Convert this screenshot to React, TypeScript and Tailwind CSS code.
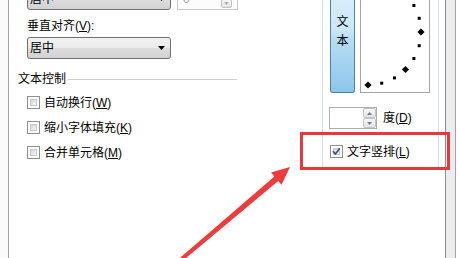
import React from "react";

function CheckBox({ checked }: { checked?: boolean }) {
  return (
    <div className="relative w-[13px] h-[13px] shrink-0 border border-[#8e8f8f] bg-white p-[2px]">
      <div className="w-full h-full border border-[#c4c7cb] bg-[linear-gradient(135deg,#d3d6da,#f7f8f9)]" />
      {checked && (
        <svg className="absolute left-[-1px] top-[-1px]" width="13" height="13" viewBox="0 0 13 13">
          <path d="M3 6.2 L5.4 9 L9.8 3.2" fill="none" stroke="#3e5088" strokeWidth="1.7" strokeLinejoin="round" />
        </svg>
      )}
    </div>
  );
}

function Combo() {
  return (
    <div className="w-[144px] h-[22px] shrink-0 rounded-[3px] border border-[#707070] bg-[linear-gradient(to_bottom,#f2f2f2_0%,#ebebeb_50%,#dddddd_51%,#d2d2d2_100%)] flex items-center pl-[2px] pr-[5px]">
      <span className="flex-1">居中</span>
      <svg width="7" height="4" viewBox="0 0 7 4">
        <path d="M0 0 H7 L3.5 4 Z" fill="#000" />
      </svg>
    </div>
  );
}

function SpinButtons({ light }: { light?: boolean }) {
  const arrow = light ? "#b0b0b0" : "#6a7a8c";
  return (
    <div className="flex flex-col w-[13px] h-full">
      <div className="flex-1 rounded-[2px] border border-[#c3c3c3] bg-[linear-gradient(to_bottom,#f7f7f7,#e4e4e4)] flex items-center justify-center">
        <svg width="5" height="3" viewBox="0 0 5 3"><path d="M0 3 H5 L2.5 0 Z" fill={arrow} /></svg>
      </div>
      <div className="flex-1 rounded-[2px] border border-[#c3c3c3] bg-[linear-gradient(to_bottom,#f7f7f7,#e4e4e4)] flex items-center justify-center">
        <svg width="5" height="3" viewBox="0 0 5 3"><path d="M0 0 H5 L2.5 3 Z" fill={arrow} /></svg>
      </div>
    </div>
  );
}

function Dots() {
  const cx = 7;
  const cy = 32;
  const r = 53;
  const items: { a: number; big: boolean }[] = [
    { a: -45, big: true },
    { a: -30, big: false },
    { a: -15, big: false },
    { a: 0, big: true },
    { a: 15, big: false },
    { a: 30, big: false },
    { a: 45, big: true },
    { a: 60, big: false },
    { a: 75, big: false },
    { a: 90, big: true },
  ];
  return (
    <svg width="68" height="92" viewBox="0 0 68 92" className="block">
      {items.map((it, i) => {
        const rad = (it.a * Math.PI) / 180;
        const x = cx + r * Math.cos(rad);
        const y = cy + r * Math.sin(rad);
        if (it.big) {
          const s = 3.6;
          return (
            <polygon
              key={i}
              points={`${x},${y - s} ${x + s},${y} ${x},${y + s} ${x - s},${y}`}
              fill="#000"
            />
          );
        }
        return <rect key={i} x={x - 1.5} y={y - 1.5} width="3" height="3" fill="#000" />;
      })}
    </svg>
  );
}

export default function App() {
  return (
    <div className="relative w-[458px] h-[258px] overflow-hidden bg-white flex text-[12px] leading-[16px] text-black font-['Liberation_Sans','Noto_Sans_CJK_SC',sans-serif]">
      {/* left edge */}
      <div className="w-[8px] h-full bg-[#fafafa]" />
      <div className="w-px h-full bg-[#a0a0a0]" />

      {/* left column */}
      <div className="w-[313px] h-full flex flex-col pl-[9px]">
        <div className="flex mt-[-12px] ml-[9px] h-[22px]">
          <Combo />
          <div className="ml-[6px] w-[61px] h-[22px] border border-[#c8c8c8] bg-[#fcfcfc] flex items-center pr-[5px] py-[1px]">
            <span className="flex-1 pl-[5px] text-[#9b9b9b]">0</span>
            <div className="h-full w-[11px] flex">
              <SpinButtons light />
            </div>
          </div>
        </div>

        <div className="mt-[8px] ml-[9px] leading-[17px]">
          垂直对齐(<span className="underline">V</span>):
        </div>

        <div className="mt-[2px] ml-[9px]">
          <Combo />
        </div>

        <div className="mt-[12px] w-[219px] flex items-center h-[16px]">
          <span>文本控制</span>
          <div className="flex-1 ml-[2px] h-px bg-[#cfcfcf]" />
        </div>

        <div className="mt-[3px] flex flex-col">
          <div className="h-[25px] flex items-center ml-[9px] gap-[4px]">
            <CheckBox />
            <span>
              自动换行(<span className="underline">W</span>)
            </span>
          </div>
          <div className="h-[25px] flex items-center ml-[9px] gap-[4px]">
            <CheckBox />
            <span>
              缩小字体填充(<span className="underline">K</span>)
            </span>
          </div>
          <div className="h-[25px] flex items-center ml-[9px] gap-[4px]">
            <CheckBox />
            <span>
              合并单元格(<span className="underline">M</span>)
            </span>
          </div>
        </div>
      </div>

      {/* right section */}
      <div className="flex h-full">
        <div className="w-[117px] h-[168px] border-l border-r border-b border-[#d5dfe5] flex flex-col">
          <div className="flex h-[93px] pl-[7px]">
            <div className="w-[25px] h-full border border-t-0 border-[#52809f] rounded-b-[3px] bg-[linear-gradient(to_bottom,#d6ecfa_0%,#cde7f8_32%,#b7ddf5_42%,#a3d2f1_70%,#8cc6ec_100%)] flex flex-col items-center pt-[13px] leading-[19px]">
              <span>文</span>
              <span>本</span>
            </div>
            <div className="ml-[5px] w-[70px] h-full border border-t-0 border-[#a5a5a5] bg-white">
              <Dots />
            </div>
          </div>

          <div className="mt-[14px] h-[22px] flex items-center pl-[6px]">
            <div className="w-[48px] h-[22px] border border-[#abadb3] bg-white flex justify-end">
              <SpinButtons />
            </div>
            <span className="ml-[6px]">
              度(<span className="underline">D</span>)
            </span>
          </div>

          <div className="mt-[10px] h-[25px] flex items-center pl-[7px] gap-[4px]">
            <CheckBox checked />
            <span>
              文字竖排(<span className="underline">L</span>)
            </span>
          </div>
        </div>
        <div className="w-[6px] h-full" />
        <div className="w-px h-full bg-[#8f8f8f]" />
        <div className="w-[9px] h-full bg-[#ededed]" />
        <div className="w-px h-full bg-[#a3a3a3]" />
        <div className="w-[2px] h-full bg-white" />
      </div>

      {/* annotation overlays */}
      <div className="absolute left-[300px] top-[132px] w-[150px] h-[38px] border-[3px] border-[#e8383d] pointer-events-none" />
      <svg className="absolute left-0 top-0 pointer-events-none" width="458" height="258" viewBox="0 0 458 258">
        <polygon
          points="290,167 281.5,184.8 278.2,181.0 181.3,262.0 178.7,259.0 274.4,176.4 271.1,172.6"
          fill="#ee3b3b"
        />
      </svg>
    </div>
  );
}
